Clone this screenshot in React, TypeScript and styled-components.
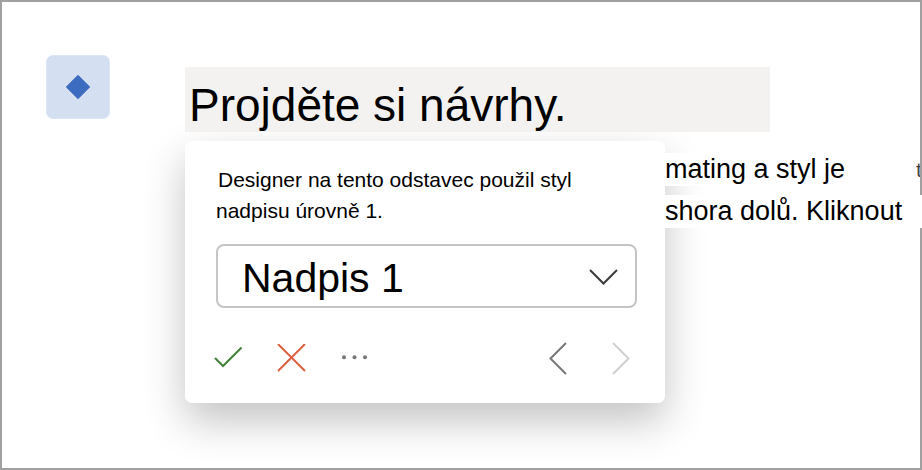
import React, { useState } from "react";
import styled, { createGlobalStyle } from "styled-components";

const GlobalStyle = createGlobalStyle`
  *, *::before, *::after { box-sizing: border-box; }
  body {
    margin: 0;
    background: #fff;
    color: #000;
    font-family: "Liberation Sans", Arial, sans-serif;
  }
`;

const Page = styled.main`
  display: flex;
  align-items: flex-start;
  gap: 75px;
  min-height: 100vh;
  padding: 53px 0 32px 44px;
  border: 2px solid #a0a0a0;
`;

const DesignerButton = styled.button`
  display: grid;
  place-items: center;
  flex: none;
  width: 64px;
  height: 64px;
  padding: 0;
  border: 1px solid #dbe5f4;
  border-radius: 7px;
  background: #d4dff1;
`;

const Document = styled.div`
  flex: 1;
  min-width: 0;
  padding-top: 12px;
`;

const Heading = styled.h1`
  position: relative;
  z-index: 1;
  margin: 0 150px 9px 0;
  padding: 11px 4px 0;
  background: #f3f2f1;
  font-size: 46px;
  font-weight: 400;
  line-height: 54px;
  white-space: nowrap;
`;

const Row = styled.div`
  display: flex;
  align-items: flex-start;
`;

const Card = styled.section`
  flex: none;
  width: 480px;
  padding: 23px 28px 20px 31px;
  border-radius: 7px;
  background: #fff;
  box-shadow: 0 18px 42px rgba(0, 0, 0, 0.24);
`;

const Message = styled.label`
  display: block;
  font-size: 21px;
  line-height: 31px;
  text-indent: 2px;
`;

const SelectWrap = styled.div`
  display: grid;
  align-items: center;
  margin: 18px 0 25px;

  & > * { grid-area: 1 / 1; }
  & > svg { justify-self: end; margin-right: 19px; pointer-events: none; }
`;

const StyleSelect = styled.select`
  appearance: none;
  width: 100%;
  height: 64px;
  padding: 4px 60px 0 24px;
  border: 2px solid #c6c5c4;
  border-radius: 8px;
  background: #fff;
  color: #000;
  font: 400 41px "Liberation Sans", Arial, sans-serif;
`;

const Toolbar = styled.div`
  display: flex;
  align-items: center;
  gap: 23px;
  margin: 0 -4px 0 -8px;
`;

const IconButton = styled.button<{ $push?: boolean }>`
  display: grid;
  place-items: center;
  width: 40px;
  height: 50px;
  padding: 0;
  border: 0;
  background: transparent;
  margin-left: ${(p) => (p.$push ? "auto" : "0")};
`;

const Body = styled.div`
  display: grid;
  flex: 1;
  gap: 9px;
  min-width: 0;
  margin-right: -2px;
  padding-top: 12px;
  font-size: 27px;
  line-height: 33px;
  white-space: nowrap;
`;

const Line = styled.div<{ $inset?: boolean }>`
  display: flex;
  justify-content: space-between;
  overflow: hidden;
  margin-right: ${(p) => (p.$inset ? "2px" : "0")};
  background: #fff;
`;

const Cut = styled.span`
  width: 4px;
  overflow: hidden;
  color: #444;
  font-size: 21px;
`;

const Stroke = ({ d, color, w, h, width = 2 }: { d: string; color: string; w: number; h: number; width?: number }) => (
  <svg width={w} height={h} viewBox={`0 0 ${w} ${h}`} fill="none" stroke={color} strokeWidth={width} aria-hidden="true">
    <path d={d} />
  </svg>
);

export default function App() {
  const [level, setLevel] = useState("1");
  return (
    <>
      <GlobalStyle />
      <Page>
        <DesignerButton aria-label="Designer">
          <svg width="26" height="26" viewBox="0 0 26 26" aria-hidden="true">
            <path d="M13 1.3 24.7 13 13 24.7 1.3 13Z" fill="#3c6cc0" stroke="#3c6cc0" strokeLinejoin="round" />
          </svg>
        </DesignerButton>
        <Document>
          <Heading>Projděte si návrhy.</Heading>
          <Row>
            <Card>
              <Message htmlFor="paragraph-style">
                Designer na tento odstavec použil styl
                <br />
                nadpisu úrovně 1.
              </Message>
              <SelectWrap>
                <StyleSelect id="paragraph-style" value={level} onChange={(e) => setLevel(e.target.value)}>
                  <option value="1">Nadpis 1</option>
                </StyleSelect>
                <Stroke d="M1 2 14.5 15.5 28 2" color="#3b3a39" w={29} h={17} />
              </SelectWrap>
              <Toolbar>
                <IconButton aria-label="Přijmout">
                  <Stroke d="M1 11 9 19 27.5 0.5" color="#43803a" w={28} h={22} />
                </IconButton>
                <IconButton aria-label="Odmítnout">
                  <Stroke d="M1 0 28 27M28 0 1 27" color="#dc5f3f" w={29} h={29} />
                </IconButton>
                <IconButton aria-label="Další možnosti">
                  <svg width="26" height="6" viewBox="0 0 26 6" fill="#797775" aria-hidden="true">
                    <circle cx="3" cy="2.2" r="2" />
                    <circle cx="13.5" cy="2.2" r="2" />
                    <circle cx="24" cy="2.2" r="2" />
                  </svg>
                </IconButton>
                <IconButton $push aria-label="Předchozí">
                  <Stroke d="M17 1 1.5 16.5 17 32" color="#797775" w={18} h={33} />
                </IconButton>
                <IconButton disabled aria-label="Další">
                  <Stroke d="M1 1 16.5 16.5 1 32" color="#d2d0ce" w={18} h={33} />
                </IconButton>
              </Toolbar>
            </Card>
            <Body>
              <Line $inset>
                <span>mating a styl je</span>
                <Cut>t</Cut>
              </Line>
              <Line>shora dolů. Kliknout</Line>
            </Body>
          </Row>
        </Document>
      </Page>
    </>
  );
}
